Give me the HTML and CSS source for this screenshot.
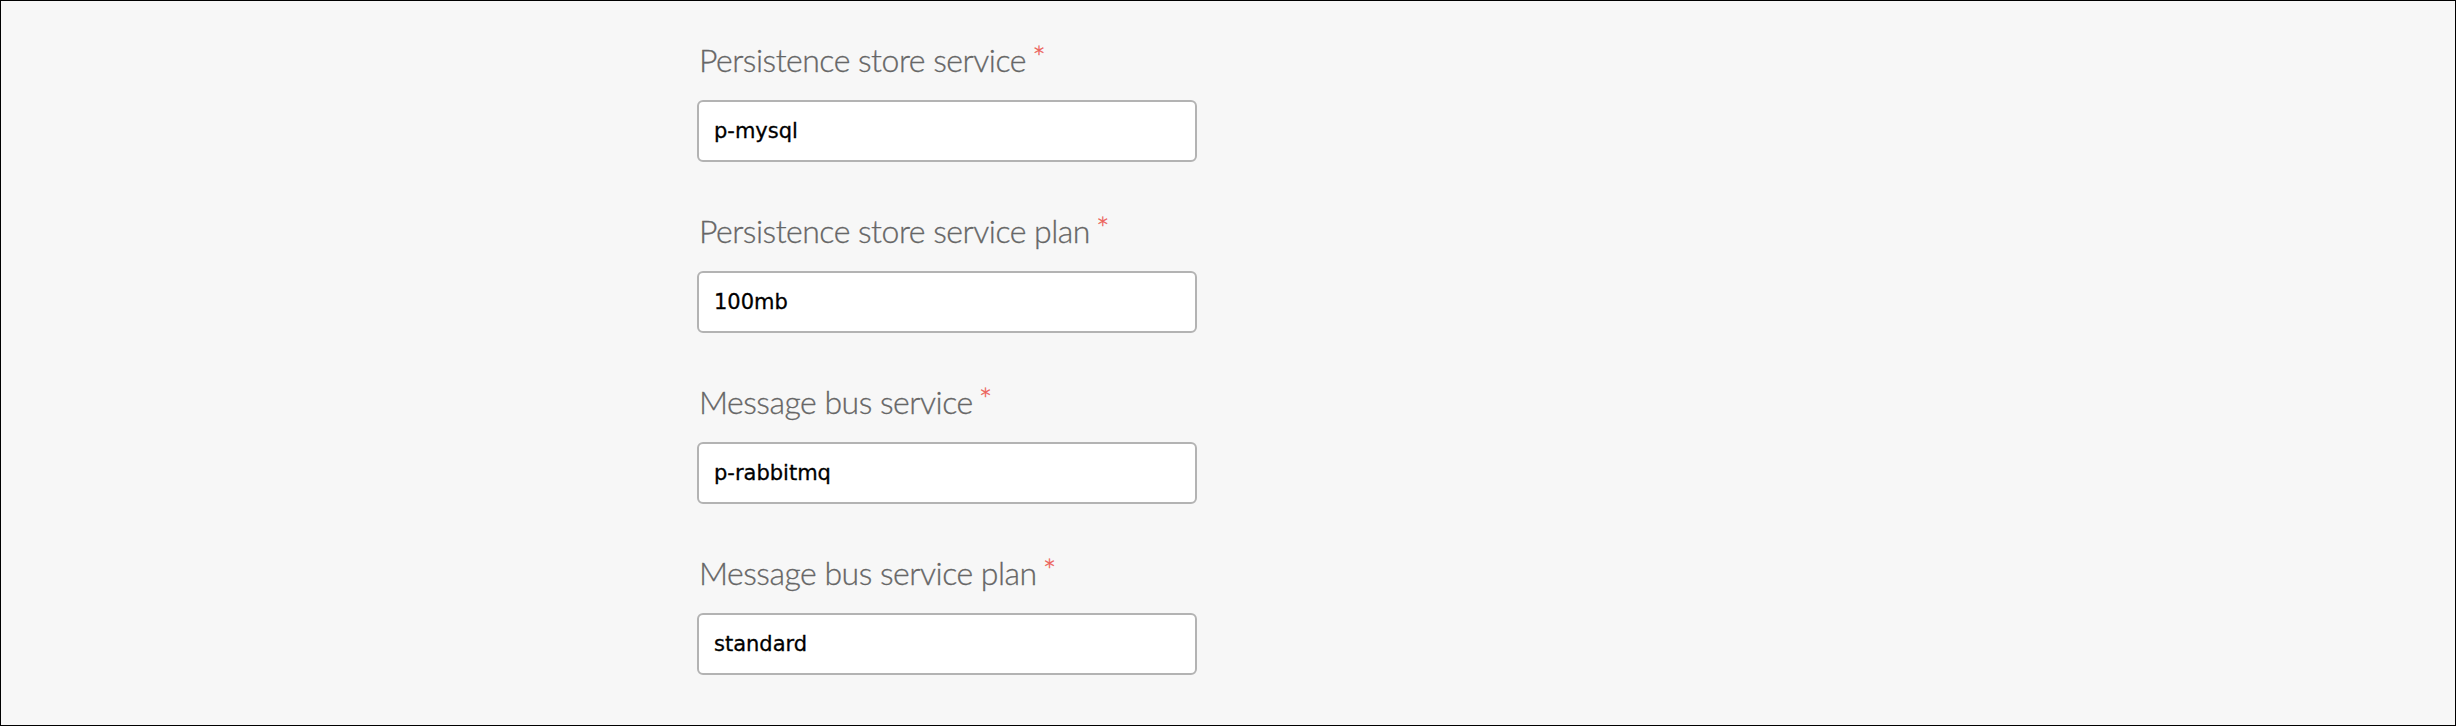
FILE: index.html
```html
<!DOCTYPE html>
<html lang="en">
<head>
  <meta charset="UTF-8">
  <meta name="viewport" content="width=device-width, initial-scale=1.0">
  <title>Service settings</title>
  <link rel="stylesheet" href="styles.css">
</head>
<body>
  <div class="page">
    <form class="settings">
      <div class="field">
        <label for="storeService">Persistence store service <span class="req">*</span></label>
        <input type="text" id="storeService" value="p-mysql" required>
      </div>
      <div class="field">
        <label for="storePlan">Persistence store service plan <span class="req">*</span></label>
        <input type="text" id="storePlan" value="100mb" required>
      </div>
      <div class="field">
        <label for="busService">Message bus service <span class="req">*</span></label>
        <input type="text" id="busService" value="p-rabbitmq" required>
      </div>
      <div class="field">
        <label for="busPlan">Message bus service plan <span class="req">*</span></label>
        <input type="text" id="busPlan" value="standard" required>
      </div>
    </form>
  </div>
</body>
</html>
```

FILE: styles.css
```css
* { box-sizing: border-box; }
html, body { margin: 0; height: 100%; }
body { background: #f7f7f7; }
.page { height: 726px; border: 1px solid #000; padding: 39px 0 0 696px; overflow: hidden; }
.settings { width: 500px; display: flex; flex-direction: column; gap: 49px; }
.field { display: flex; flex-direction: column; }
label { display: block; height: 40px; font-family: Lato, "Open Sans", sans-serif; font-weight: 300; font-size: 32px; line-height: 40px; color: #666; margin-bottom: 20px; margin-left: 2px; letter-spacing: -0.5px; -webkit-text-stroke: 0.3px #666; }
.req { color: #ec5f58; -webkit-text-stroke: 0.3px #ec5f58; font-size: 32px; line-height: 0; vertical-align: 3px; margin-left: -2px; }
input { width: 500px; height: 62px; padding: 0 15px; border: 2px solid #b3b3b3; border-radius: 6px; background: #fff; font-family: "DejaVu Sans", sans-serif; font-size: 21px; color: #000; -webkit-text-stroke: 0.3px #000; }
```
